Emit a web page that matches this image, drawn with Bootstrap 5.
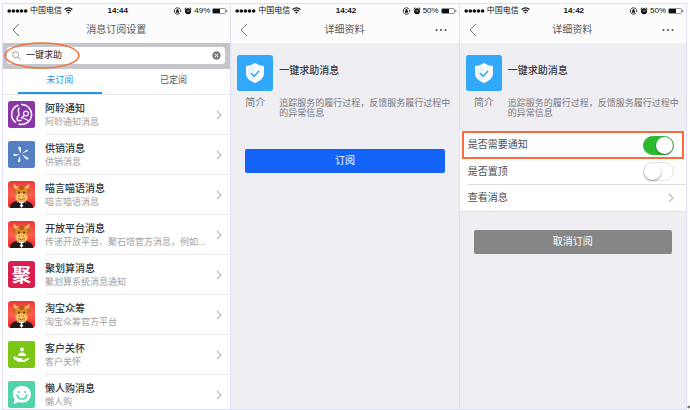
<!DOCTYPE html>
<html lang="zh-CN">
<head>
<meta charset="utf-8">
<meta name="viewport" content="width=device-width, initial-scale=1">
<title>消息订阅设置</title>
<link rel="stylesheet" href="https://cdn.jsdelivr.net/npm/bootstrap@5.3.0/dist/css/bootstrap.min.css">
<style>
body{font-family:"Liberation Sans","Noto Sans CJK SC",sans-serif;font-size:10px;line-height:14px;color:#4a4d50;background:#fff}
svg{display:block;flex:none}
.board{padding:3px 0 1px 2px}
.phone{border:1px solid #e0dffa;border-right:0;background:#efeef3}
.phone.last-phone{border-right:1px solid #e0dffa}
.top-area{background:#fcfcfc}
.status{height:13px;padding:0 2px 0 4px;font-size:8px;line-height:13px;color:#111}
.status-side{flex:1 1 0;gap:2px}
.status b{font-size:8px}
.title-bar{height:26px;padding:0 10px 0 9px}
.title-bar h1{font-size:10px;line-height:14px;font-weight:400;margin:0;flex:1;text-align:center;color:#55585b}
.icon-btn{border:0;background:none;padding:0;width:16px;display:flex}
.search-area{background:#c5c5ca;padding:4px 5px 5px 4px}
.search-field{background:#fff;border-radius:3px;height:17px;padding:0 4px 0 5px;gap:5px}
.search-field input{border:0;outline:0;padding:0;font-size:9px;line-height:13px;color:#222;min-width:0;background:none}
.mark-oval{position:absolute;left:1px;top:-1px;width:76px;height:27px;pointer-events:none}
.tab-strip{border-bottom:1px solid #e6e6e8;height:26px}
.tab-strip .nav-link{font-size:9px;line-height:13px;color:#55585b;padding:5px 0;margin:0 15px;border-bottom:2px solid transparent}
.tab-strip .nav-link.active{color:#1f93e6;border-color:#1f93e6}
.message-row{padding-left:5px;gap:10px;color:inherit;text-decoration:none}
.message-row svg.app{margin-top:6px}
.message-body{border-bottom:1px solid #eaeaec;padding:5px 8px 5px 0;height:40px}
.message-row:last-child .message-body{border:0;height:34px;padding-bottom:0}
.message-name{font-size:10px;line-height:15px;font-weight:500;color:#30363c}
.message-sub{font-size:9px;line-height:13px;color:#a2a2a4}
.glyph-icon{width:27px;height:27px;margin-top:6px;border-radius:3px;background:#d91f52;color:#fff;font:700 19px/26px "Noto Sans CJK SC",sans-serif;text-align:center;flex:none}
.service-info{padding:12px 4px 0 6px;gap:6px}
.service-icon{width:36px;flex:none}
.service-name{font-size:10px;line-height:14px;font-weight:500;color:#34383c;margin:0;height:36px;padding-top:9px}
.intro{font-size:9px;line-height:10px;color:#77787b;margin:0;padding-top:7px}
.intro-label{color:#77787b;padding-top:5px;line-height:14px;text-align:center}
.detail-head{min-height:88px}
.main-action{display:block;margin:18px 14px 0;padding:5px 0;border:0;border-radius:2px;font-size:10px;line-height:14px;color:#fff}
.subscribe{background:#1463f8}
.unsubscribe{background:#868686}
.settings{background:#fff;border-bottom:1px solid #dedee2}
.setting-row{height:26px;margin-left:8px;padding-right:12px;border-bottom:1px solid #dedee2;color:#4a4d50;text-decoration:none}
.setting-row.plain{border:0}
.setting-mark{border:2px solid #fa6a3c;margin:0 2px;padding-left:4px}
.setting-mark .setting-row{height:24px;margin:0;padding-right:8px}
.toggle{appearance:none;margin:0;width:31px;height:19px;border:1px solid #e2e2e4;border-radius:10px;background:#fff;display:flex;cursor:pointer}
.toggle::before{content:"";width:17px;height:17px;border-radius:50%;background:#fff;box-shadow:0 1px 2px #0006}
.toggle:checked{background:#2db92f;border-color:#2db92f;justify-content:flex-end}
.edge{width:3px}
</style>
<script src="https://cdn.jsdelivr.net/npm/bootstrap@5.3.0/dist/js/bootstrap.bundle.min.js"></script>
</head>
<body>
<svg width="0" height="0" class="position-absolute" aria-hidden="true">
  <linearGradient id="red" x1="0" y1="0" x2="0" y2="1"><stop offset="0" stop-color="#f0383a"/><stop offset=".5" stop-color="#fb6050"/><stop offset="1" stop-color="#ea2428"/></linearGradient>
  <symbol id="signal" viewBox="0 0 22 6"><g fill="#111"><circle cx="2.3" cy="3" r="1.9"/><circle cx="6.6" cy="3" r="1.9"/><circle cx="10.9" cy="3" r="1.9"/><circle cx="15.2" cy="3" r="1.9"/><circle cx="19.5" cy="3" r="1.9"/></g></symbol>
  <symbol id="wifi" viewBox="0 0 9 7"><g fill="none" stroke="#111" stroke-width="1.3"><path d="M.6 2.5Q4.500-.8 8.400 2.500M2.100 4.200Q4.500 2.200 6.900 4.200"/></g><path d="M3.2 5.2Q4.5 4.2 5.8 5.2L4.5 6.8Z" fill="#111"/></symbol>
  <symbol id="lock" viewBox="0 0 9 8"><path d="M7.2 5.6A3.2 3.2 0 1 1 7.2 2.4M7.700 2.700V5" fill="none" stroke="#222" stroke-width=".9"/><path d="M3 3.700h3v2H3zM3.500 3.700V3a1 1 0 0 1 2 0v.7" fill="#222"/></symbol>
  <symbol id="alarm" viewBox="0 0 8 8"><circle cx="4" cy="4.2" r="3" fill="#111"/><path d="M.6 2.100 2.200.7M7.400 2.100 5.800.7" stroke="#111" stroke-width="1"/><path d="M3 3.300 4 4.600 5.500 3.200" fill="none" stroke="#fff" stroke-width=".7"/></symbol>
  <symbol id="battery" viewBox="0 0 16 6"><rect x=".5" y=".5" width="13" height="5" rx="1" fill="#fff" stroke="#666" stroke-width=".7"/><path d="M1 1h7v4H1z" fill="#111"/><path d="M14.500 2v2q1-.3 1-1t-1-1" fill="#111"/></symbol>
  <symbol id="back" viewBox="0 0 8 14"><path d="M7 1 1 7l6 6" fill="none" stroke="#77797c" stroke-width="1"/></symbol>
  <symbol id="next" viewBox="0 0 6 10"><path d="M1 1l4 4-4 4" fill="none" stroke="#bdbdc0" stroke-width="1.2"/></symbol>
  <symbol id="dots" viewBox="0 0 12 4"><g fill="#44474a"><circle cx="1.5" cy="2" r="1"/><circle cx="6" cy="2" r="1"/><circle cx="10.5" cy="2" r="1"/></g></symbol>
  <symbol id="shield" viewBox="0 0 36 36"><rect width="36" height="36" rx="2.5" fill="#32a8fb"/><path d="M18 8c3 2 6 2.800 9 3v7c0 5-4 8-9 10-5-2-9-5-9-10v-7c3-.2 6-1 9-3z" fill="#fff"/><path d="M18 10.500c-2.400 1.500-4.600 2-7 2.300V18c0 4 3 6.300 7 8z" fill="#e6f4ff"/><path d="M14 18.300l3.200 3 5-5.600" fill="none" stroke="#359fe8" stroke-width="1.4"/></symbol>
  <symbol id="bull" viewBox="0 0 27 27"><rect width="27" height="27" rx="3" fill="url(#red)"/><path d="M2 27q0-5 5-6.500h13q5 1.500 5 6.500z" fill="#24191d"/><path d="M9 20.500l4.500 6.500 4.500-6.500z" fill="#fff"/><path d="M8.500 8Q4.500 7 6 2.500q1.500 3 6 3.500zM18.500 8Q22.500 7 21 2.500q-1.500 3-6 3.500z" fill="#f7c168"/><path d="M4 9.500q3-1.500 5 .5v2.500q-4 .5-5-3zM23 9.500q-3-1.500-5 .5v2.500q4 .5 5-3z" fill="#c8691e"/><path d="M7.500 8q6-5.500 12 0l-.5 10q-5.500 4-11 0z" fill="#e08a2c"/><path d="M10.500 5.500q3-1.500 6 0l-1.500 3.500h-3z" fill="#b95a18"/><ellipse cx="13.500" cy="16.500" rx="6.300" ry="4.300" fill="#f6bf63"/><circle cx="11" cy="11.500" r=".9" fill="#3c1b10"/><circle cx="16" cy="11.500" r=".9" fill="#3c1b10"/><circle cx="11.500" cy="15" r=".5" fill="#8c4516"/><circle cx="15.500" cy="15" r=".5" fill="#8c4516"/><path d="M10 17.500q3.500 2.500 7 0" fill="none" stroke="#a4541b" stroke-width=".8"/><path d="M13.500 23l-3.500-2v4zM13.500 23l3.500-2v4z" fill="#171114"/></symbol>
  <symbol id="purple" viewBox="0 0 27 27"><rect width="27" height="27" rx="2.5" fill="#8b35a7"/><g fill="none" stroke="#fff"><path d="M10.500 4A10 10 0 0 0 8 21.700M13 3.500A10 10 0 1 1 10.500 23" stroke-width="1.5"/><path d="M11 6.500q-1.500 4 0 7.500-3 3-1.500 5.500h4" stroke-width="1.4"/><circle cx="18" cy="12.500" r="2.400" stroke-width="1.1"/><path d="M16.200 14.300l-3.200 3.200M14 16.500l6.500 3" stroke-width="1.1"/></g></symbol>
  <symbol id="blue" viewBox="0 0 27 27"><rect width="27" height="27" rx="2" fill="#557fc3"/><g fill="#fff"><path d="M12.800 12.500 10 6.500q2-1.500 3 .5z"/><path d="M14 12.500l5-4q1.500 1 .2 2z"/><path d="M12 13.500l-6.500-.5q-.6 2 1.500 2z"/><path d="M12 14.500l-2.200 6q1.600 1.500 2.500-.5z"/><path d="M14 13.500l6.500 3.500q0 2-2 1.500z"/></g></symbol>
  <symbol id="care" viewBox="0 0 27 27"><rect width="27" height="27" rx="2" fill="#7bc614"/><g fill="#fff"><circle cx="14" cy="8.5" r="2"/><path d="M10 15q0-3.500 4-3.500t4 3.500z"/><path d="M5.500 15.500q3-.5 5 1.500l4 .5q1 1.300-1 1.500h2l4.800-2.200q1.700.2.700 1.500L16.500 21h-6l-5-3z"/></g></symbol>
  <symbol id="smile" viewBox="0 0 27 27"><rect width="27" height="27" rx="2" fill="#50d3aa"/><path d="M14 5c5.500 0 9 3.500 9 8.200S19.500 21.500 14 21.500q-2 0-3.500-.6L5.500 23l1.200-4.700Q4.800 16.300 4.800 13C4.800 8.400 8.500 5 14 5z" fill="#fff"/><path d="M9 13.500q.8 4.500 5 4.500t5-4.500" fill="none" stroke="#50d3aa" stroke-width="1.5"/><circle cx="10.800" cy="11" r="1.1" fill="#50d3aa"/><circle cx="17.200" cy="11" r="1.1" fill="#50d3aa"/></symbol>
</svg>
<main class="board d-flex">
<div class="row g-0 flex-fill">
  <section class="col-4 phone bg-white">
    <header class="top-area">
      <div class="status d-flex align-items-center">
        <div class="status-side d-flex align-items-center"><svg width="21" height="6"><use href="#signal"/></svg><span>中国电信</span><svg width="9" height="7"><use href="#wifi"/></svg></div>
        <b>14:44</b>
        <div class="status-side d-flex align-items-center justify-content-end"><svg width="9" height="8"><use href="#lock"/></svg><svg width="8" height="8"><use href="#alarm"/></svg><span>49%</span><svg width="16" height="6"><use href="#battery"/></svg></div>
      </div>
      <div class="title-bar d-flex align-items-center"><button class="icon-btn" aria-label="返回"><svg width="8" height="14"><use href="#back"/></svg></button><h1>消息订阅设置</h1><span class="icon-btn"></span></div>
    </header>
    <div class="search-area position-relative">
      <div class="search-field d-flex align-items-center">
        <svg width="9" height="9" viewBox="0 0 9 9"><g fill="none" stroke="#888" stroke-width=".8"><circle cx="3.700" cy="3.700" r="3"/><path d="M6 6l2.700 2.700"/></g></svg>
        <input class="flex-fill" type="text" value="一键求助" aria-label="搜索">
        <button class="icon-btn w-auto" aria-label="清除"><svg width="9" height="9" viewBox="0 0 9 9"><circle cx="4.500" cy="4.500" r="4.200" fill="#7e7e84"/><path d="M3 3l3 3M6 3L3 6" stroke="#fff"/></svg></button>
      </div>
      <svg class="mark-oval" viewBox="0 0 76 27"><ellipse cx="38" cy="13.500" rx="37" ry="12.500" fill="none" stroke="#f3703c" stroke-width="1.5"/></svg>
    </div>
    <nav class="nav nav-fill tab-strip"><a class="nav-item nav-link active" href="#">未订阅</a><a class="nav-item nav-link" href="#">已定阅</a></nav>
    <div>
      <a href="#" class="message-row d-flex"><svg class="app" width="27" height="27"><use href="#purple"/></svg><div class="message-body d-flex flex-fill align-items-center"><div class="flex-fill"><div class="message-name">阿聆通知</div><div class="message-sub">阿聆通知消息</div></div><svg width="6" height="10"><use href="#next"/></svg></div></a>
      <a href="#" class="message-row d-flex"><svg class="app" width="27" height="27"><use href="#blue"/></svg><div class="message-body d-flex flex-fill align-items-center"><div class="flex-fill"><div class="message-name">供销消息</div><div class="message-sub">供销消息</div></div><svg width="6" height="10"><use href="#next"/></svg></div></a>
      <a href="#" class="message-row d-flex"><svg class="app" width="27" height="27"><use href="#bull"/></svg><div class="message-body d-flex flex-fill align-items-center"><div class="flex-fill"><div class="message-name">喵言喵语消息</div><div class="message-sub">喵言喵语消息</div></div><svg width="6" height="10"><use href="#next"/></svg></div></a>
      <a href="#" class="message-row d-flex"><svg class="app" width="27" height="27"><use href="#bull"/></svg><div class="message-body d-flex flex-fill align-items-center"><div class="flex-fill"><div class="message-name">开放平台消息</div><div class="message-sub text-nowrap">传递开放平台、聚石塔官方消息，例如...</div></div><svg width="6" height="10"><use href="#next"/></svg></div></a>
      <a href="#" class="message-row d-flex"><span class="glyph-icon">聚</span><div class="message-body d-flex flex-fill align-items-center"><div class="flex-fill"><div class="message-name">聚划算消息</div><div class="message-sub">聚划算系统消息通知</div></div><svg width="6" height="10"><use href="#next"/></svg></div></a>
      <a href="#" class="message-row d-flex"><svg class="app" width="27" height="27"><use href="#bull"/></svg><div class="message-body d-flex flex-fill align-items-center"><div class="flex-fill"><div class="message-name">淘宝众筹</div><div class="message-sub">淘宝众筹官方平台</div></div><svg width="6" height="10"><use href="#next"/></svg></div></a>
      <a href="#" class="message-row d-flex"><svg class="app" width="27" height="27"><use href="#care"/></svg><div class="message-body d-flex flex-fill align-items-center"><div class="flex-fill"><div class="message-name">客户关怀</div><div class="message-sub">客户关怀</div></div><svg width="6" height="10"><use href="#next"/></svg></div></a>
      <a href="#" class="message-row d-flex"><svg class="app" width="27" height="27"><use href="#smile"/></svg><div class="message-body d-flex flex-fill align-items-center"><div class="flex-fill"><div class="message-name">懒人购消息</div><div class="message-sub">懒人购</div></div><svg width="6" height="10"><use href="#next"/></svg></div></a>
    </div>
  </section>

  <section class="col-4 phone">
    <header class="top-area">
      <div class="status d-flex align-items-center">
        <div class="status-side d-flex align-items-center"><svg width="21" height="6"><use href="#signal"/></svg><span>中国电信</span><svg width="9" height="7"><use href="#wifi"/></svg></div>
        <b>14:42</b>
        <div class="status-side d-flex align-items-center justify-content-end"><svg width="9" height="8"><use href="#lock"/></svg><svg width="8" height="8"><use href="#alarm"/></svg><span>50%</span><svg width="16" height="6"><use href="#battery"/></svg></div>
      </div>
      <div class="title-bar d-flex align-items-center"><button class="icon-btn" aria-label="返回"><svg width="8" height="14"><use href="#back"/></svg></button><h1>详细资料</h1><button class="icon-btn justify-content-center" aria-label="更多"><svg width="12" height="4"><use href="#dots"/></svg></button></div>
    </header>
    <div class="service-info detail-head d-flex">
      <div class="service-icon"><svg width="36" height="36"><use href="#shield"/></svg><div class="intro-label">简介</div></div>
      <div><h2 class="service-name">一键求助消息</h2><p class="intro">追踪服务的履行过程，反馈服务履行过程中的异常信息</p></div>
    </div>
    <div class="d-grid"><button class="main-action subscribe">订阅</button></div>
  </section>

  <section class="col-4 phone last-phone">
    <header class="top-area">
      <div class="status d-flex align-items-center">
        <div class="status-side d-flex align-items-center"><svg width="21" height="6"><use href="#signal"/></svg><span>中国电信</span><svg width="9" height="7"><use href="#wifi"/></svg></div>
        <b>14:42</b>
        <div class="status-side d-flex align-items-center justify-content-end"><svg width="9" height="8"><use href="#lock"/></svg><svg width="8" height="8"><use href="#alarm"/></svg><span>50%</span><svg width="16" height="6"><use href="#battery"/></svg></div>
      </div>
      <div class="title-bar d-flex align-items-center"><button class="icon-btn" aria-label="返回"><svg width="8" height="14"><use href="#back"/></svg></button><h1>详细资料</h1><button class="icon-btn justify-content-center" aria-label="更多"><svg width="12" height="4"><use href="#dots"/></svg></button></div>
    </header>
    <div class="service-info detail-head d-flex">
      <div class="service-icon"><svg width="36" height="36"><use href="#shield"/></svg><div class="intro-label">简介</div></div>
      <div><h2 class="service-name">一键求助消息</h2><p class="intro">追踪服务的履行过程，反馈服务履行过程中的异常信息</p></div>
    </div>
    <div class="settings">
      <div class="setting-mark"><div class="setting-row plain d-flex align-items-center justify-content-between"><label for="notify">是否需要通知</label><input class="toggle" type="checkbox" role="switch" id="notify" checked></div></div>
      <div class="setting-row d-flex align-items-center justify-content-between"><label for="pin">是否置顶</label><input class="toggle" type="checkbox" role="switch" id="pin"></div>
      <a href="#" class="setting-row plain d-flex align-items-center justify-content-between"><span>查看消息</span><svg width="6" height="10"><use href="#next"/></svg></a>
    </div>
    <div class="d-grid"><button class="main-action unsubscribe">取消订阅</button></div>
  </section>
</div>
<div class="edge d-flex align-items-end"><svg width="3" height="6" viewBox="0 0 3 6"><path d="M0 3l2-2v1h1v2H2v1z" fill="#777"/></svg></div>
</main>
</body>
</html>
